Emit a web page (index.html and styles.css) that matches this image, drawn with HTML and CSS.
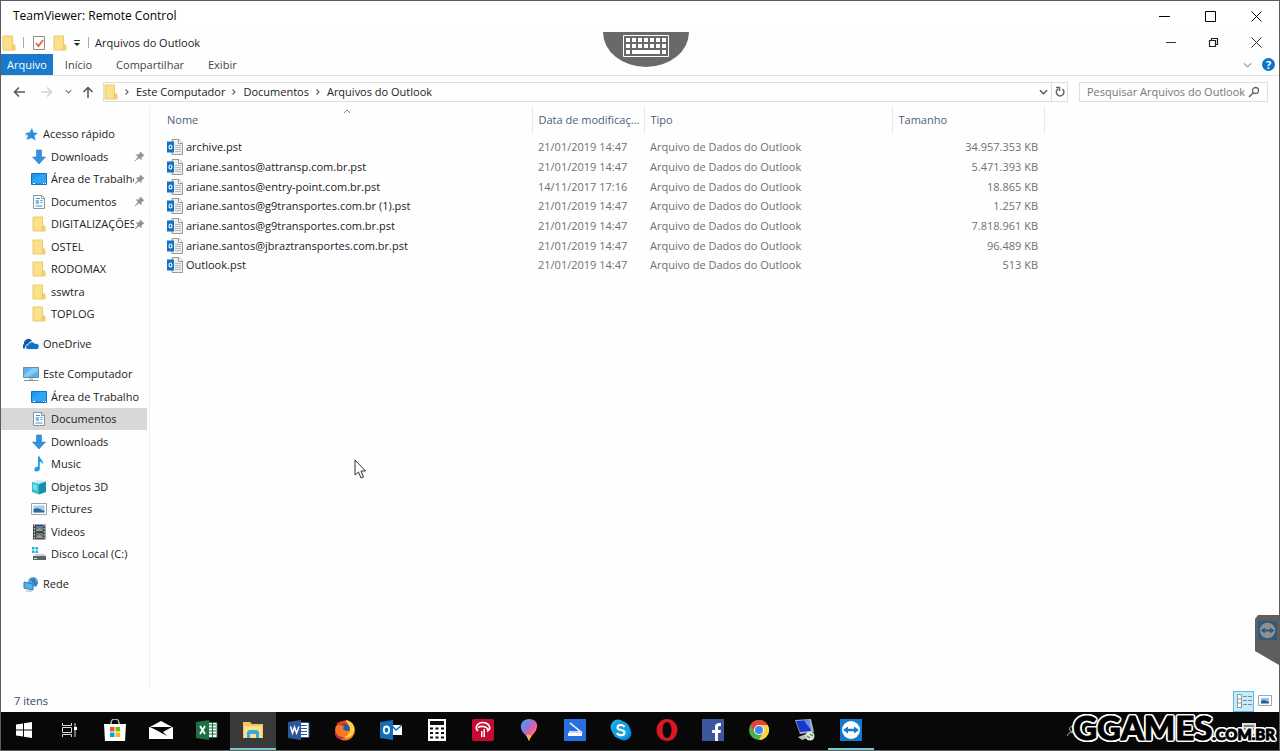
FILE: index.html
```
<!DOCTYPE html>
<html lang="pt-BR">
<head>
	<meta charset="UTF-8">
	<title>TeamViewer: Remote Control</title>
	<link rel="stylesheet" href="styles.css">
</head>
<body>
<!-- shared icons -->
<svg class="defs" aria-hidden="true">
	<symbol id="folder" viewBox="0 0 14 16"><path d="M1 1h9.500v8.500l2.500 1V15H1z" fill="#fbe08a" stroke="#ecca68"/><path d="M10.500 9.500h2V15h-3v-4z" fill="#f3cd63"/></symbol>
	<symbol id="download" viewBox="0 0 16 16"><path d="M5.500 1h5v7h4L8 15 1.500 8h4z" fill="#3590dd" stroke="#2f80c8" stroke-width=".6"/></symbol>
	<symbol id="desktop" viewBox="0 0 16 16"><path d="M.5 2.500h15v11H.5z" fill="#1c98ee" stroke="#1173c0"/><path d="M1 9l9-6h5v9H1z" fill="#46b0f6" opacity=".5"/><path d="M2 12.500h2m8 0h1m1 0h1" stroke="#fff"/></symbol>
	<symbol id="doc" viewBox="0 0 16 16"><path d="M2.500 1.500h8.500l2.500 2.500v10.500h-11z" fill="#fff" stroke="#8b959d"/><path d="M10.500 1.500v3h3" fill="none" stroke="#8b959d"/><path d="M5 4.500h4M4.500 6.500h3m2 0h2M4.500 8.500h3m2 0h2M4.500 12h7" stroke="#3c96cf" stroke-width="1.200"/><path d="M5 6h3v4H5z" fill="#79bde8"/></symbol>
	<symbol id="pin" viewBox="0 0 12 12"><path d="M7 1l4 4-1.500.5L8 7v2.500L5.500 7.500 1 11l3.500-4.500L2.500 4H5l1.500-1.500z" fill="#8a949b" stroke="#8a949b" stroke-width=".6"/></symbol>
	<symbol id="pst" viewBox="0 0 16 16"><path d="M5 .5h7l3.500 3.500v11.500H5z" fill="#eee" stroke="#999"/><path d="M11.500.5v4h4" fill="#fff" stroke="#999"/><path d="M8 6.500h6m-6 2h6m-6 2h6m-6 2h6" stroke="#bbb"/><path d="M0 2.500h7v11H0z" fill="#1272c4"/><ellipse cx="3.500" cy="8" rx="1.500" ry="2" fill="none" stroke="#fff" stroke-width="1.100"/></symbol>
	<symbol id="right" viewBox="0 0 6 8"><path d="M1.500 1.500L4 4 1.500 6.500" fill="none" stroke="#666" stroke-width="1.200"/></symbol>
	<symbol id="down" viewBox="0 0 10 6"><path d="M1 1l4 4 4-4" fill="none" stroke="currentColor" stroke-width="1.500"/></symbol>
	<symbol id="close" viewBox="0 0 11 11"><path d="M.5.5l10 10m0-10l-10 10" stroke="currentColor"/></symbol>
	<symbol id="tv" viewBox="0 0 22 22"><path d="M0 0h22v22H0z" fill="#1479cf"/><circle cx="11" cy="11" r="9" fill="#fff"/><path d="M3 11l5-3.500v2.300h6V7.500l5 3.500-5 3.500v-2.300H8v2.300z" fill="#1479cf"/></symbol>
</svg>

<div class="window">
	<header class="titlebar">
		<h1 class="title">TeamViewer: Remote Control</h1>
		<div class="controls">
			<button aria-label="Minimizar"><svg width="11" height="11"><path d="M0 5.500h11" stroke="#000"/></svg></button>
			<button aria-label="Maximizar"><svg width="11" height="11"><path d="M.5.5h10v10H.5z" fill="none" stroke="#000"/></svg></button>
			<button aria-label="Fechar"><svg width="11" height="11"><use href="#close"/></svg></button>
		</div>
	</header>

	<!-- remote explorer window -->
	<div class="quickbar">
		<svg width="14" height="16"><use href="#folder"/></svg>
		<span class="sep"></span>
		<button class="check" aria-label="Propriedades"><svg width="12" height="16"><path d="M.5 1.500h11v13H.5z" fill="#fff" stroke="#8d8d8d"/><path d="M3 8l2.500 3L10 5" fill="none" stroke="#e5633a" stroke-width="1.800"/></svg></button>
		<button class="newdir" aria-label="Nova pasta"><svg width="14" height="16"><use href="#folder"/></svg></button>
		<button class="more" aria-label="Personalizar"><svg width="8" height="8"><path d="M1 1.500h6" stroke="#333"/><path d="M1 4h6L4 7z" fill="#222"/></svg></button>
		<span class="sep"></span>
		<h2 class="caption">Arquivos do Outlook</h2>
		<div class="controls inner">
			<button aria-label="Minimizar janela"><svg width="10" height="11"><path d="M0 5.500h10" stroke="#333"/></svg></button>
			<button aria-label="Restaurar janela"><svg width="11" height="11"><path d="M1.500 3.500h6v6h-6zM3.500 3V1.500h6v6H8" fill="none" stroke="#222" stroke-width="1.200"/></svg></button>
			<button aria-label="Fechar janela"><svg width="11" height="11"><use href="#close"/></svg></button>
		</div>
	</div>

	<div class="tabs">
		<button class="tab file">Arquivo</button>
		<button class="tab">Início</button>
		<button class="tab">Compartilhar</button>
		<button class="tab">Exibir</button>
		<button class="expand" aria-label="Expandir faixa"><svg width="9" height="6"><use href="#down"/></svg></button>
		<button class="help" aria-label="Ajuda">?</button>
	</div>

	<div class="navrow">
		<button class="back" aria-label="Voltar"><svg width="12" height="12"><path d="M6 1.500L1.500 6 6 10.500M1.500 6H12" fill="none" stroke="#555" stroke-width="1.500"/></svg></button>
		<button class="fwd" aria-label="Avançar"><svg width="12" height="12"><path d="M6 1.500L10.500 6 6 10.500M10.500 6H0" fill="none" stroke="#d4d4d4" stroke-width="1.500"/></svg></button>
		<button class="recent" aria-label="Locais recentes"><svg width="7" height="5"><use href="#down"/></svg></button>
		<button class="up" aria-label="Acima"><svg width="12" height="12"><path d="M1.500 6L6 1.500 10.500 6M6 1.500V12" fill="none" stroke="#555" stroke-width="1.500"/></svg></button>
		<div class="address">
			<svg width="14" height="16"><use href="#folder"/></svg>
			<svg class="crumb-arrow" width="6" height="8"><use href="#right"/></svg>
			<a href="#">Este Computador</a>
			<svg class="crumb-arrow" width="6" height="8"><use href="#right"/></svg>
			<a href="#">Documentos</a>
			<svg class="crumb-arrow" width="6" height="8"><use href="#right"/></svg>
			<a href="#">Arquivos do Outlook</a>
			<button class="history" aria-label="Locais anteriores"><svg width="9" height="6"><use href="#down"/></svg></button>
			<button class="refresh" aria-label="Atualizar"><svg width="10" height="11"><path d="M3 3a3.800 3.800 0 1 0 4.500.2M1 1.500h3.500V5" fill="none" stroke="#666" stroke-width="1.500"/></svg></button>
		</div>
		<div class="search">
			<input type="text" placeholder="Pesquisar Arquivos do Outlook" aria-label="Pesquisar Arquivos do Outlook">
			<svg width="12" height="12"><circle cx="7.500" cy="4.500" r="3" fill="none" stroke="#666" stroke-width="1.300"/><path d="M5.300 6.700L1 11" stroke="#666" stroke-width="1.600"/></svg>
		</div>
	</div>

	<div class="main">
		<nav class="sidebar">
			<ul class="tree">
				<li><a class="root" href="#"><svg viewBox="0 0 16 16"><path d="M9 2l1.500 4.500 4.500.5-3.500 2.500 1 5L8.500 12 4 14l1-4.500L2 7l4.500-.5z" fill="#2b8fdf"/><path d="M2 9h3m-2 3h2" stroke="#7fc0f0"/></svg><span>Acesso rápido</span></a></li>
				<li><a href="#"><svg><use href="#download"/></svg><span>Downloads</span><svg class="pin"><use href="#pin"/></svg></a></li>
				<li><a href="#"><svg><use href="#desktop"/></svg><span>Área de Trabalho</span><svg class="pin"><use href="#pin"/></svg></a></li>
				<li><a href="#"><svg><use href="#doc"/></svg><span>Documentos</span><svg class="pin"><use href="#pin"/></svg></a></li>
				<li><a href="#"><svg><use href="#folder"/></svg><span>DIGITALIZAÇÕES</span><svg class="pin"><use href="#pin"/></svg></a></li>
				<li><a href="#"><svg><use href="#folder"/></svg><span>OSTEL</span></a></li>
				<li><a href="#"><svg><use href="#folder"/></svg><span>RODOMAX</span></a></li>
				<li><a href="#"><svg><use href="#folder"/></svg><span>sswtra</span></a></li>
				<li><a href="#"><svg><use href="#folder"/></svg><span>TOPLOG</span></a></li>
			</ul>
			<ul class="tree">
				<li><a class="root" href="#"><svg viewBox="0 0 16 16"><path d="M1 13a3 3 0 0 1 0-5 4.500 4.500 0 0 1 8-3.500L5 8z" fill="#0b5ca8"/><path d="M5 13.500a2.500 2.500 0 0 1 0-5A4 4 0 0 1 12 7.500a3 3 0 0 1 2 6z" fill="#1272c8" stroke="#fff" stroke-width=".8"/></svg><span>OneDrive</span></a></li>
			</ul>
			<ul class="tree">
				<li><a class="root" href="#"><svg viewBox="0 0 16 16"><path d="M.5 1.500h15v10H.5z" fill="#55b4ee" stroke="#6c8da5"/><path d="M1 9l8-7h6v3L5 11H1z" fill="#86cbf5"/><path d="M6 12h4v2H6z" fill="#ccc"/><path d="M1 14.500h14" stroke="#8095a3"/></svg><span>Este Computador</span></a></li>
				<li><a href="#"><svg><use href="#desktop"/></svg><span>Área de Trabalho</span></a></li>
				<li><a class="on" href="#"><svg><use href="#doc"/></svg><span>Documentos</span></a></li>
				<li><a href="#"><svg><use href="#download"/></svg><span>Downloads</span></a></li>
				<li><a href="#"><svg viewBox="0 0 16 16"><path d="M7 .5h1.800c.3 3 4.200 4 3 8-.5-2-1.600-2.500-3-2.700V13c0 3-5.500 3.500-5.500.5C3.300 11 6 10.500 7 11z" fill="#1e9be8"/></svg><span>Music</span></a></li>
				<li><a href="#"><svg viewBox="0 0 16 16"><path d="M1 3l6-2 8 1.500-7 2.500z" fill="#b9eef5"/><path d="M1 3l7 2v10.500L1 13z" fill="#39bcd2"/><path d="M8 5l7-2.500V13l-7 2.500z" fill="#178fb0"/><path d="M2 5l4 1v6l-4-2z" fill="#80dde9"/></svg><span>Objetos 3D</span></a></li>
				<li><a href="#"><svg viewBox="0 0 16 16"><path d="M.5 2.500h15v11H.5z" fill="#fff" stroke="#9ba5ac"/><path d="M2.500 4.500h11v7h-11z" fill="#9ed1f1"/><path d="M2.500 8l4-1 7 3v1.500h-11z" fill="#326b91"/></svg><span>Pictures</span></a></li>
				<li><a href="#"><svg viewBox="0 0 16 16"><path d="M2 .5h12.500v15H2z" fill="#444"/><path d="M5 2h7v5H5z" fill="#477cbf"/><path d="M5 9h7v5H5z" fill="#5878a8"/><path d="M5 6l4-2 3 3H5zm0 7l4-2 3 3H5z" fill="#b59a5f"/><path d="M3.500 1v14M13.200 1v14" stroke="#d9d9d9" stroke-dasharray="1.500 1.500"/></svg><span>Videos</span></a></li>
				<li><a href="#"><svg viewBox="0 0 16 16"><path d="M1 1h2.500v2.500H1zM4.500 1H7v2.500H4.500zM1 4.500h2.500V7H1zM4.500 4.500H7V7H4.500z" fill="#22b2dc"/><path d="M2 9.500l3-1.500h8l2 2z" fill="#c5cbd0"/><path d="M2 10h13v4H2z" fill="#59636a"/><path d="M3 12.500h3" stroke="#bdf2ad"/></svg><span>Disco Local (C:)</span></a></li>
			</ul>
			<ul class="tree">
				<li><a class="root" href="#"><svg viewBox="0 0 16 16"><circle cx="10" cy="6" r="5" fill="#57a9df"/><path d="M7 3l5-1 1 4 2 1-2 4z" fill="#347eb7"/><path d="M1 6l9 2v6l-9-2z" fill="#4fb3ed" stroke="#3478a5"/><path d="M3 15h6" stroke="#9aabb8"/></svg><span>Rede</span></a></li>
			</ul>
		</nav>

		<div class="content">
			<table class="files">
				<colgroup><col class="c-name"><col class="c-date"><col class="c-type"><col class="c-size"></colgroup>
				<thead>
					<tr>
						<th>Nome<svg class="sort" width="8" height="5"><path d="M1 4l3-3 3 3" fill="none" stroke="#888"/></svg></th>
						<th>Data de modificação</th>
						<th>Tipo</th>
						<th>Tamanho</th>
					</tr>
				</thead>
				<tbody>
					<tr><td class="name"><svg><use href="#pst"/></svg>archive.pst</td><td>21/01/2019 14:47</td><td>Arquivo de Dados do Outlook</td><td class="size">34.957.353 KB</td></tr>
					<tr><td class="name"><svg><use href="#pst"/></svg>ariane.santos@attransp.com.br.pst</td><td>21/01/2019 14:47</td><td>Arquivo de Dados do Outlook</td><td class="size">5.471.393 KB</td></tr>
					<tr><td class="name"><svg><use href="#pst"/></svg>ariane.santos@entry-point.com.br.pst</td><td>14/11/2017 17:16</td><td>Arquivo de Dados do Outlook</td><td class="size">18.865 KB</td></tr>
					<tr><td class="name"><svg><use href="#pst"/></svg>ariane.santos@g9transportes.com.br (1).pst</td><td>21/01/2019 14:47</td><td>Arquivo de Dados do Outlook</td><td class="size">1.257 KB</td></tr>
					<tr><td class="name"><svg><use href="#pst"/></svg>ariane.santos@g9transportes.com.br.pst</td><td>21/01/2019 14:47</td><td>Arquivo de Dados do Outlook</td><td class="size">7.818.961 KB</td></tr>
					<tr><td class="name"><svg><use href="#pst"/></svg>ariane.santos@jbraztransportes.com.br.pst</td><td>21/01/2019 14:47</td><td>Arquivo de Dados do Outlook</td><td class="size">96.489 KB</td></tr>
					<tr><td class="name"><svg><use href="#pst"/></svg>Outlook.pst</td><td>21/01/2019 14:47</td><td>Arquivo de Dados do Outlook</td><td class="size">513 KB</td></tr>
				</tbody>
			</table>
		</div>
	</div>

	<footer class="status">
		<span>7 itens</span>
		<div class="views">
			<button class="view on" aria-label="Detalhes"><svg width="16" height="14"><path d="M1.500.5h4v13h-4zM1.500 5h4m-4 4h4" fill="#fff" stroke="#8a9aa5"/><path d="M7 2.500h4m1 0h4m-9 4h4m1 0h4m-9 4h4m1 0h4" stroke="#7c8d98"/></svg></button>
			<button class="view" aria-label="Ícones grandes"><svg width="14" height="12"><path d="M.5.5h13v10H.5z" fill="#fff" stroke="#9aa7b0"/><path d="M3 3h8v5H3z" fill="#8fc3ea"/><path d="M3 6l3-1 5 2v1.500H3z" fill="#2f5c83"/></svg></button>
		</div>
	</footer>

	<div class="taskbar">
		<button class="start" aria-label="Iniciar"><svg width="16" height="16"><path d="M0 2.500l7-1v6H0zM8 1.300L16 0v7.500H8zM0 8.500h7v6l-7-1zM8 8.500h8V16l-8-1.200z" fill="#fff"/></svg></button>
		<button aria-label="Visão de tarefas"><svg width="16" height="16"><path d="M1.500 1v2.500h9V1M1.500 15v-2.500h9V15M1.500 5.500h9v5h-9zM14 1v14" fill="none" stroke="#ddd"/><path d="M13 5h3v3h-3z" fill="#fff"/></svg></button>
		<button aria-label="Loja"><svg width="22" height="22"><path d="M7 7V4a4 4 0 0 1 8 0v3" fill="none" stroke="#bbb" stroke-width="1.500"/><path d="M0 5h22l-1 17H1z" fill="#fff"/><path d="M6 8h4.500v4.500H6z" fill="#f25022"/><path d="M11.500 8H16v4.500h-4.500z" fill="#7fba00"/><path d="M6 13.500h4.500V18H6z" fill="#00a4ef"/><path d="M11.500 13.500H16V18h-4.500z" fill="#ffb900"/></svg></button>
		<button aria-label="Email"><svg width="24" height="18"><path d="M0 6.500L12 0l12 6.500V18H0z" fill="#fff"/><path d="M1 6h22l-9 5 4 4L8 9.500z" fill="#080808"/></svg></button>
		<button aria-label="Excel"><svg width="22" height="20"><path d="M11 2.500h10v15H11z" fill="#fff" stroke="#1d7145"/><path d="M13 5h7m-7 3h7m-7 3h7m-7 3h7M16.500 3v14" stroke="#1d7145" stroke-width="1.200"/><path d="M0 2l13-2v20L0 18z" fill="#1d7145"/><path d="M4 6l5 8m0-8l-5 8" stroke="#fff" stroke-width="1.800"/></svg></button>
		<button class="active" aria-label="Explorador de Arquivos"><svg width="20" height="18"><path d="M0 1h7l2 2h11v14H0z" fill="#f2c65b"/><path d="M1 5h18v12H1z" fill="#fbe08d"/><path d="M4 17v-6l2-2h8l2 2v6h-3v-4H7v4z" fill="#39a9dc"/></svg></button>
		<button aria-label="Word"><svg width="22" height="20"><path d="M11 2.500h10v15H11z" fill="#fff" stroke="#2b579a"/><path d="M13 5.500h6m-6 3h6m-6 3h6m-6 3h6" stroke="#2b579a"/><path d="M0 2l13-2v20L0 18z" fill="#2b579a"/><path d="M2.500 6.500L4.500 13l2-6 2 6L11 6.500" fill="none" stroke="#fff" stroke-width="1.500"/></svg></button>
		<button aria-label="Firefox"><svg width="22" height="22"><circle cx="11" cy="11.500" r="10" fill="#f27820"/><path d="M12 1c8 1 10 9 7 14s-8 4-11 3c8 0 9-8 4-12z" fill="#ffd23c"/><path d="M2 4l3 3 4-1c3 0-1 3 1 5h4c2-6-2-9-4-9C5 2 4 5 2 4z" fill="#e6392d"/><circle cx="11" cy="10" r="5" fill="#285b9f"/><path d="M5 6l5 1-1 3 3 2c2 0 3-1 4 0-1 4-7 5-10 1z" fill="#ff7924"/><path d="M1 10c0 5 5 9 10 8-3 4-9 2-10-3z" fill="#d72552"/></svg></button>
		<button aria-label="Outlook"><svg width="22" height="20"><path d="M10 5h12v10H10z" fill="#fff"/><path d="M12 6l4 4 6-5" fill="none" stroke="#1272c4" stroke-width="1.500"/><path d="M0 2l13-2v20L0 18z" fill="#0f6fbe"/><ellipse cx="6.500" cy="10" rx="2.700" ry="3.500" fill="none" stroke="#fff" stroke-width="1.800"/></svg></button>
		<button aria-label="Calculadora"><svg width="18" height="22"><path d="M0 0h18v22H0z" fill="#fff"/><path d="M2 2h14v4H2z" fill="#111"/><path d="M2 9.500h14M2 14h14M2 18.500h14" stroke="#111" stroke-width="2" stroke-dasharray="3 2.500"/></svg></button>
		<button aria-label="Bradesco"><svg width="22" height="22"><rect width="22" height="22" rx="2" fill="#c60b32"/><path d="M6 12C2 8 6 3.500 11 3.500s9 5 5 8c0-4-6-5-10-3" fill="none" stroke="#fff" stroke-width="1.700"/><path d="M9 12h1.500v6H9zm2.500-2H13v8h-1.500z" fill="#fff"/></svg></button>
		<button aria-label="Paint 3D"><svg width="18" height="22"><defs><linearGradient id="paint" x1="0" y1="0" x2="1" y2="1"><stop offset="0" stop-color="#32b7ec"/><stop offset=".35" stop-color="#8879e1"/><stop offset=".6" stop-color="#f4579a"/><stop offset="1" stop-color="#ffd43b"/></linearGradient></defs><path d="M9 0c6 0 9 4 8 8-1 6-6 8-8 14-1-6-7-7-8-13C0 4 4 0 9 0z" fill="url(#paint)"/><path d="M6 16c2 0 4-1 5 1l-2 5z" fill="#f5bc38"/></svg></button>
		<button aria-label="Scanner"><svg width="22" height="22"><path d="M0 0h22v22H0z" fill="#286fe0"/><path d="M6 4l11 9H5" fill="none" stroke="#fff" stroke-width="1.500"/><path d="M4 14h14v3H4z" fill="#fff"/></svg></button>
		<button aria-label="Skype"><svg width="22" height="22"><circle cx="8" cy="8" r="7.500" fill="#1bb1ed"/><circle cx="14" cy="14" r="7.500" fill="#0785d1"/><circle cx="11" cy="11" r="9" fill="#13a0e2"/><path d="M14.500 8C13 5 7.500 5.500 7.500 8.500c0 3.500 7 1.500 7 5 0 3.500-6 3.500-7.500.5" fill="none" stroke="#fff" stroke-width="2.200"/></svg></button>
		<button aria-label="Opera"><svg width="22" height="22"><ellipse cx="11" cy="11" rx="10.500" ry="11" fill="#dc1624"/><ellipse cx="11" cy="11" rx="4.500" ry="8" fill="#080808"/></svg></button>
		<button aria-label="Facebook"><svg width="22" height="22"><path d="M0 0h22v22H0z" fill="#3c579d"/><path d="M13 22v-8h-3v-3h3V8c0-3 2-4.500 6-4v3c-2 0-3 0-3 1.500V11h3l-.5 3H16v8z" fill="#fff"/></svg></button>
		<button aria-label="Chrome"><svg width="22" height="22"><circle cx="11" cy="11" r="10" fill="#4caf50"/><path d="M2.300 6A10 10 0 0 1 19.700 6H11L7 13z" fill="#e84235"/><path d="M19.700 6A10 10 0 0 1 11 21l4-8-2-7z" fill="#fdd23d"/><circle cx="11" cy="11" r="5" fill="#fff"/><circle cx="11" cy="11" r="4" fill="#4285f4"/></svg></button>
		<button aria-label="Conexão remota"><svg width="22" height="22"><path d="M1 1l16-1 3 13-14 2z" fill="#aab2bc"/><path d="M2 2l13-1 2 11-11 1z" fill="#1537cf"/><path d="M10 1.500l5-.5 2 10z" fill="#6e8ff0"/><path d="M4 18l8-3 4 3-8 3z" fill="#bbb"/><circle cx="16" cy="17" r="4.500" fill="#dfe5da"/><path d="M13 17l3 2m0-4l3 2" stroke="#35943b" stroke-width="1.400"/></svg></button>
		<button class="running" aria-label="TeamViewer"><svg width="22" height="22"><use href="#tv"/></svg></button>
		<div class="tray">
			<svg width="10" height="12"><circle cx="5" cy="4" r="2.500" fill="none" stroke="#aaa"/><path d="M.5 11c0-5 9-5 9 0" fill="none" stroke="#aaa"/></svg>
			<svg class="notify" width="16" height="18"><path d="M1 1h14v11H9l-3 4v-4H1z" fill="#ddd"/><path d="M3 4h10M3 7h10" stroke="#222"/></svg>
		</div>
	</div>

	<!-- items floating over the remote desktop -->
	<button class="keyboard" aria-label="Teclado">
		<svg width="46" height="22"><path d="M.5.500h45v21H.5z" fill="none" stroke="#fff"/><path d="M3 5h40M3 11h40" stroke="#fff" stroke-width="4" stroke-dasharray="4 2"/><path d="M3 17h4m2 0h28m2 0h4" stroke="#fff" stroke-width="4"/></svg>
	</button>
	<svg class="cursor" width="13" height="20"><path d="M1 1v15l3.500-3 2.500 6 2.500-1L7 12h4.500z" fill="#fff" stroke="#333"/></svg>
	<button class="sidetab" aria-label="Painel TeamViewer"><svg width="25" height="50"><path d="M4 0h21v50L1 36V4z" fill="#5f5f5f"/><svg x="4" y="6" width="19" height="19"><use href="#tv"/></svg><path d="M4 6h19v19H4z" fill="#444" opacity=".6"/></svg></button>
	<div class="brand">GGAMES<small>.COM.BR</small></div>
</div>
</body>
</html>
```
FILE: styles.css
```
*{box-sizing: border-box;}
body,ul,h1,h2{margin: 0;padding: 0;list-style: none;}
body{font: 11px/16px "Open Sans","Noto Sans",sans-serif;color: #222;}
a{color: inherit;text-decoration: none;}
button{padding: 0;border: 0;background: none;font: inherit;color: inherit;}
svg{display: block;flex: none;}
.defs{position: absolute;width: 0;height: 0;}

.window{position: relative;display: flex;flex-direction: column;min-height: 100vh;border: 1px solid #5c5c5c;background: #fefefe;overflow: hidden;}

/* title bars */
.titlebar{display: flex;align-items: center;justify-content: space-between;height: 30px;padding-left: 12px;background: #fff;}
.title{font-size: 12px;font-weight: 400;color: #000;}
.controls{display: flex;color: #000;}
.controls button{display: flex;align-items: center;justify-content: center;width: 46px;height: 24px;}
.quickbar{display: flex;align-items: center;height: 23px;padding-left: 1px;}
.sep{width: 1px;height: 11px;margin: 0 6px 0 7px;background: #aaa;}
.check{margin-left: 3px;}
.newdir{margin-left: 8px;}
.more{margin-left: 6px;}
.caption{font-size: 11px;font-weight: 400;}
.inner{margin-left: auto;margin-right: 1px;color: #333;}
.inner button{width: 43px;}

/* ribbon tabs */
.tabs{display: flex;align-items: center;height: 22px;border-bottom: 1px solid #e3e3e3;color: #444;}
.tab{height: 21px;padding: 0 12px;}
.file{padding: 0 6px;background: #1979ca;color: #fff;}
.expand{margin-left: auto;color: #aaa;}
.help{width: 13px;height: 13px;margin: 0 4px 0 10px;border-radius: 50%;background: #1173c7;color: #fff;font-weight: 700;line-height: 13px;}

/* address row */
.navrow{display: flex;align-items: center;height: 31px;padding: 0 11px 0 12px;}
.fwd{margin-left: 16px;}
.recent{margin-left: 12px;color: #777;}
.up{margin: 0 9px 0 10px;}
.address{display: flex;flex: 1;align-items: center;height: 20px;border: 1px solid #dedede;}
.crumb-arrow{margin: 0 6px;}
.history{margin-left: auto;margin-right: 3px;color: #555;}
.refresh{display: flex;align-items: center;justify-content: center;width: 16px;height: 18px;border-left: 1px solid #dedede;}
.search{display: flex;align-items: center;width: 189px;height: 20px;margin-left: 11px;padding: 0 7px;border: 1px solid #dedede;}
.search input{flex: 1;min-width: 0;padding: 0;border: 0;outline: 0;background: none;font: inherit;}
.search input::placeholder{color: #777;opacity: 1;}

/* folder tree */
.main{display: flex;flex: 1;}
.sidebar{width: 149px;padding-top: 16px;border-right: 1px solid #f0f0f0;}
.tree{margin-bottom: 8px;}
.tree a{display: flex;align-items: center;height: 22px;margin-right: 2px;padding-left: 30px;}
.tree li:nth-child(even) a{height: 23px;}
.tree .root{padding-left: 22px;}
.tree svg{width: 16px;height: 16px;}
.tree span{flex: 1;margin-left: 4px;overflow: hidden;white-space: nowrap;}
.tree .pin{width: 11px;height: 11px;margin-right: 2px;}
.tree .on{background: #d8d8d8;}

/* file list */
.content{flex: 1;padding-left: 11px;}
.files{table-layout: fixed;width: 883px;border-collapse: collapse;white-space: nowrap;}
.c-name{width: 371px;}
.c-date{width: 112px;}
.c-type{width: 248px;}
.c-size{width: 152px;}
.files th{position: relative;height: 26px;padding: 0 2px 0 6px;border-right: 1px solid #e8e8e8;color: #4c607a;font-weight: 400;text-align: left;overflow: hidden;text-overflow: ellipsis;}
.sort{position: absolute;top: 2px;left: 49%;}
.files tbody:before{content: '';display: block;height: 4px;}
.files td{height: 20px;padding: 0 6px;line-height: 16px;color: #707070;}
.files tr:nth-child(3n) td{height: 19px;}
.files .name{color: #222;}
.name svg{float: left;width: 16px;height: 16px;margin-right: 3px;}
.size{text-align: right;}

.status{display: flex;align-items: center;justify-content: space-between;height: 22px;padding: 0 4px 0 13px;color: #2f4468;}
.views{display: flex;}
.view{display: flex;align-items: center;justify-content: center;width: 21px;height: 21px;}
.view.on{border: 1px solid #5eb8e0;background: #c8ebfa;}

/* taskbar */
.taskbar{display: flex;height: 38px;background: #080808;}
.taskbar button{display: flex;align-items: center;justify-content: center;width: 46px;border-bottom: 2px solid transparent;}
.taskbar .start{width: 45px;}
.taskbar .active{background: #3a3a3a;border-color: #76c9d4;}
.taskbar .running{border-color: #76c9d4;}
.tray{display: flex;align-items: center;justify-content: space-between;width: 190px;margin-left: auto;margin-right: 22px;}

/* overlays */
.keyboard{position: absolute;top: 31px;left: calc(50% - 37px);display: flex;justify-content: center;width: 86px;height: 35px;padding-top: 3px;border-radius: 0 0 43px 43px / 0 0 35px 35px;background: #696969;}
.cursor{position: absolute;top: 458px;left: 353px;}
.sidetab{position: absolute;right: 0;bottom: 85px;}
.brand{position: absolute;right: 4px;bottom: 1px;font: 900 33px/30px Lato,sans-serif;color: #000;-webkit-text-stroke: 1px #000;text-shadow: 2px 0 #fff,-2px 0 #fff,0 2px #fff,0 -2px #fff,1px 2px #fff,-1px 2px #fff,1px -2px #fff,-1px -2px #fff,2px 1px #fff,-2px 1px #fff,2px -1px #fff,-2px -1px #fff;}
.brand small{font-size: 15px;}
```
